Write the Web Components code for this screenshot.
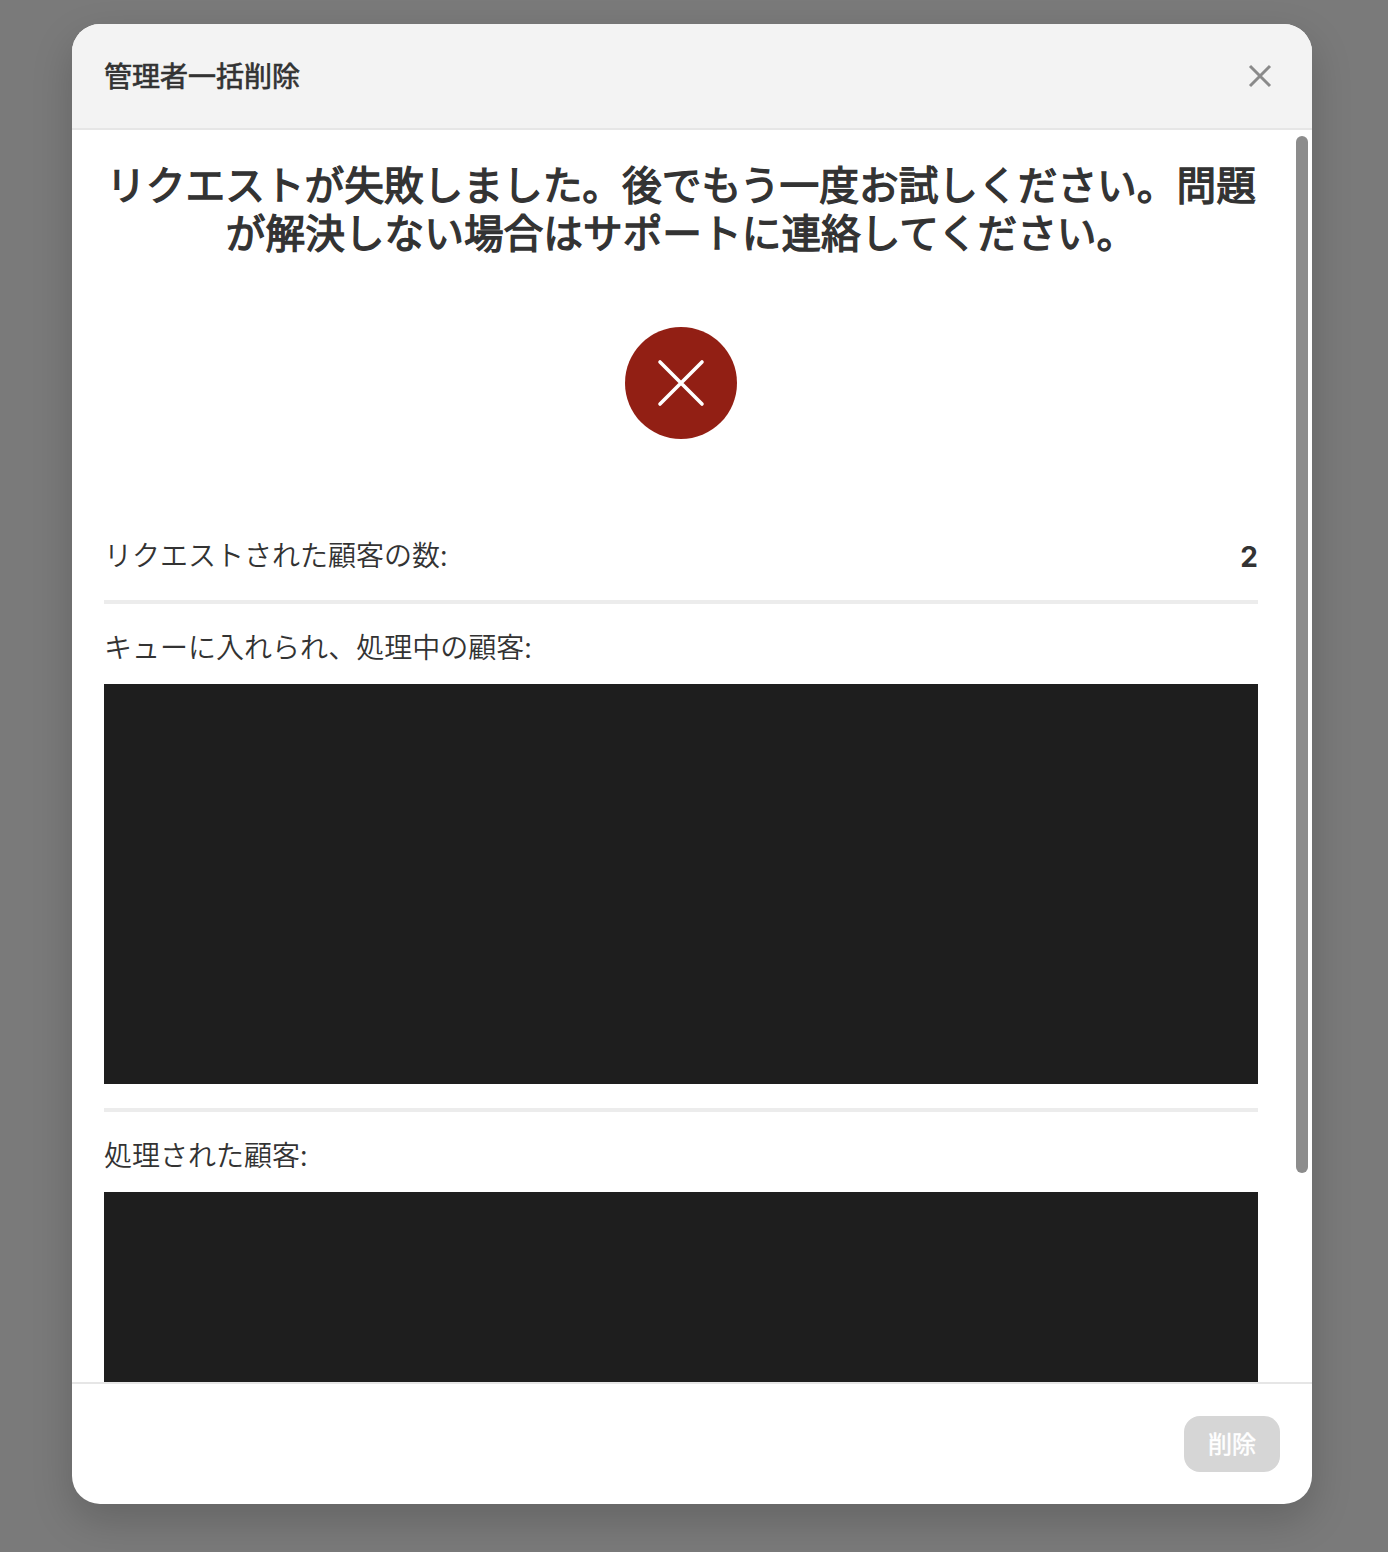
<!DOCTYPE html>
<html lang="ja">
<head>
<meta charset="utf-8">
<title>管理者一括削除</title>
<style>
html,body{margin:0;height:100%;overflow:hidden;background:#7a7a7a}
body{font-family:"Noto Sans CJK JP","Noto Sans",sans-serif;color:#333}
</style>
</head>
<body>
<template id="t-backdrop">
<style>
:host{display:block;box-sizing:border-box;width:1388px;height:1552px;padding:24px 76px 48px 72px;background:#7a7a7a}
</style>
<slot></slot>
</template>

<template id="t-modal">
<style>
:host{display:flex;flex-direction:column;height:1480px;background:#fff;border-radius:28px;overflow:hidden;position:relative;box-shadow:0 16px 40px rgba(0,0,0,.18)}
header{flex:none;box-sizing:border-box;height:106px;background:#f3f3f3;border-bottom:2px solid #e6e6e6;display:flex;align-items:center;justify-content:space-between;padding:0 32px}
h2{margin:0;padding-bottom:2px;font-size:28px;line-height:40px;font-weight:400;-webkit-text-stroke:.7px #333;color:#333}
.close{display:block;width:24px;height:24px;margin-right:8px;flex:none}
.body{flex:1;min-height:0;overflow:hidden;position:relative}
.content{padding:32px 54px 0 32px}
.thumb{position:absolute;top:6px;right:4px;width:12px;height:1037px;border-radius:6px;background:#8c8c8c}
footer{flex:none;box-sizing:border-box;height:122px;border-top:2px solid #e6e6e6;display:flex;justify-content:flex-end;align-items:flex-start;padding:32px 32px 0}
</style>
<header>
<h2><slot name="title"></slot></h2>
<svg class="close" viewBox="0 0 24 24" fill="none" stroke="#8a8a8a" stroke-width="3"><path d="M2 2 22 22M22 2 2 22"/></svg>
</header>
<div class="body"><div class="content"><slot></slot></div><div class="thumb"></div></div>
<footer><slot name="footer"></slot></footer>
</template>

<template id="t-status">
<style>
:host{display:block}
h1{margin:-3px 0 0;font-size:39.7px;line-height:48px;font-weight:400;-webkit-text-stroke:1.3px #333;text-align:center;color:#333}
.icon{display:block;width:112px;height:112px;margin:72px auto 97px}
</style>
<h1><slot></slot></h1>
<svg class="icon" viewBox="0 0 112 112"><circle cx="56" cy="56" r="56" fill="#921f14"/><path d="M35 35 77 77M77 35 35 77" stroke="#fff" stroke-width="3.6" stroke-linecap="round" fill="none"/></svg>
</template>

<template id="t-row">
<style>
:host{display:flex;justify-content:space-between;align-items:flex-start;font-size:28px;line-height:36px;font-weight:350;color:#333;height:64px;border-bottom:4px solid #ececec}
::slotted([slot=value]){font-family:Inter,"Noto Sans",sans-serif;font-weight:700;line-height:42px}
</style>
<slot></slot><slot name="value"></slot>
</template>

<template id="t-section">
<style>
:host{display:block;padding-top:24px}
.label{font-size:28px;line-height:36px;font-weight:350;color:#333;margin-bottom:20px}
.redacted{height:400px;background:#1e1e1e}
.wrap{padding-bottom:24px}
:host([divided]) .wrap{border-bottom:4px solid #ececec}
</style>
<div class="wrap"><div class="label"><slot></slot></div><div class="redacted"></div></div>
</template>

<template id="t-button">
<style>
:host{display:inline-flex;align-items:center;justify-content:center;box-sizing:border-box;width:96px;height:56px;padding-bottom:2px;border-radius:16px;background:#d6d6d6;color:#fff;font-size:24px;line-height:32px;font-weight:400;-webkit-text-stroke:.5px #fff}
</style>
<slot></slot>
</template>

<x-backdrop>
<x-modal>
<span slot="title">管理者一括削除</span>
<x-status>リクエストが失敗しました。後でもう一度お試しください。問題が解決しない場合はサポートに連絡してください。</x-status>
<x-row>リクエストされた顧客の数:<span slot="value">2</span></x-row>
<x-section divided>キューに入れられ、処理中の顧客:</x-section>
<x-section>処理された顧客:</x-section>
<x-button slot="footer">削除</x-button>
</x-modal>
</x-backdrop>

<script>
const reg={'x-backdrop':'t-backdrop','x-modal':'t-modal','x-status':'t-status','x-row':'t-row','x-section':'t-section','x-button':'t-button'};
for(const [name,id] of Object.entries(reg)){
  customElements.define(name,class extends HTMLElement{
    constructor(){super();this.attachShadow({mode:'open'}).appendChild(document.getElementById(id).content.cloneNode(true));}
  });
}
</script>
</body>
</html>
